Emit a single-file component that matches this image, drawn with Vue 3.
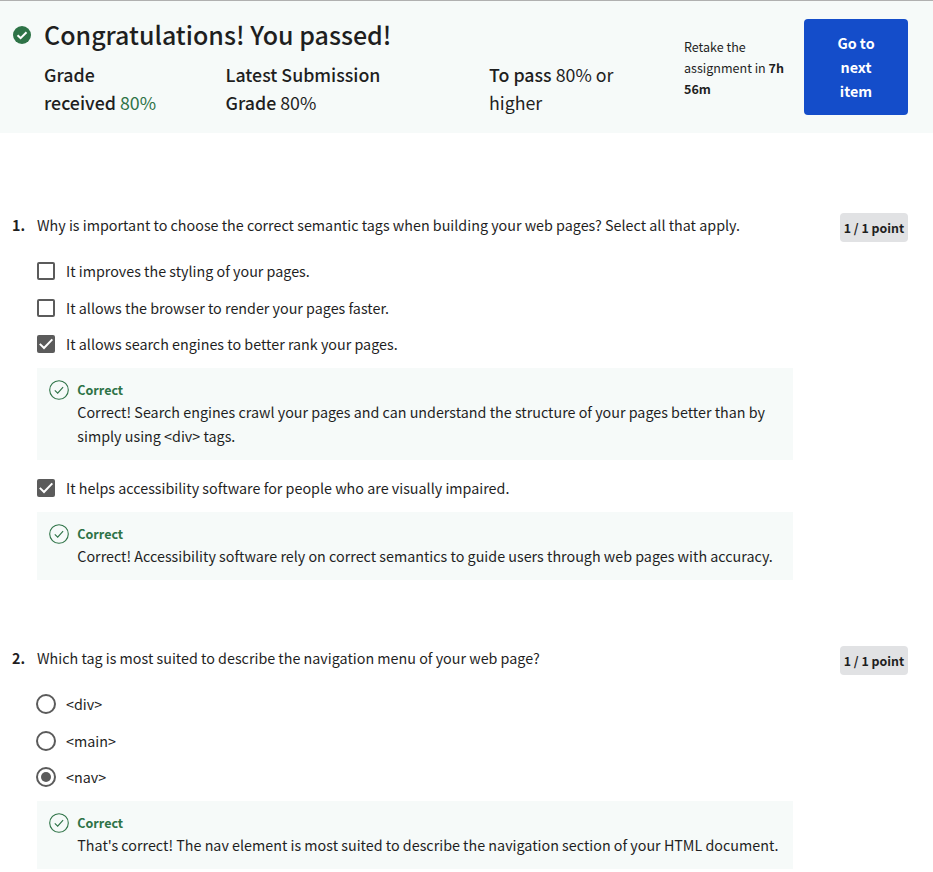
<script setup>
const questions = [
  {
    number: 1,
    prompt: 'Why is important to choose the correct semantic tags when building your web pages? Select all that apply.',
    type: 'checkbox',
    options: [
      { label: 'It improves the styling of your pages.' },
      { label: 'It allows the browser to render your pages faster.' },
      {
        label: 'It allows search engines to better rank your pages.',
        checked: true,
        feedback: [
          'Correct! Search engines crawl your pages and can understand the structure of your pages better than by',
          'simply using <div> tags.',
        ],
      },
      {
        label: 'It helps accessibility software for people who are visually impaired.',
        checked: true,
        feedback: ['Correct! Accessibility software rely on correct semantics to guide users through web pages with accuracy.'],
      },
    ],
  },
  {
    number: 2,
    prompt: 'Which tag is most suited to describe the navigation menu of your web page?',
    type: 'radio',
    options: [
      { label: '<div>' },
      { label: '<main>' },
      {
        label: '<nav>',
        checked: true,
        feedback: ["That's correct! The nav element is most suited to describe the navigation section of your HTML document."],
      },
    ],
  },
]
</script>

<template>
  <div class="page">
    <header class="banner">
      <svg class="pass-icon" viewBox="0 0 18 18">
        <circle cx="9" cy="9" r="9" />
        <path d="M4.5 9.2 7.6 12.1 13.5 6.2" />
      </svg>
      <div class="summary">
        <h1>Congratulations! You passed!</h1>
        <div class="grades">
          <p><b>Grade<br />received</b> <span class="green">80%</span></p>
          <p><b>Latest Submission<br />Grade</b> 80%</p>
          <p><b>To pass</b> 80% or<br />higher</p>
        </div>
      </div>
      <p class="retake">Retake the<br />assignment in <b>7h<br />56m</b></p>
      <button class="next">Go to<br />next<br />item</button>
    </header>

    <main>
      <section v-for="q in questions" :key="q.number" class="question">
        <span class="number">{{ q.number }}.</span>
        <div class="body">
          <p class="prompt">{{ q.prompt }}</p>
          <div v-for="o in q.options" :key="o.label">
            <div class="option">
              <svg v-if="q.type === 'checkbox'" class="control" viewBox="0 0 20 20">
                <rect v-if="!o.checked" class="outline" x="2" y="2" width="16" height="16" rx="1" />
                <template v-else>
                  <rect class="fill" x="1" y="1" width="18" height="18" rx="2" />
                  <path class="tick" d="M3.8 9.9 8 14 16.3 5.4" />
                </template>
              </svg>
              <svg v-else class="control" viewBox="0 0 20 20">
                <circle class="outline" cx="10" cy="10" r="9" />
                <circle v-if="o.checked" class="fill" cx="10" cy="10" r="5" />
              </svg>
              <span>{{ o.label }}</span>
            </div>
            <div v-if="o.feedback" class="feedback">
              <svg class="ok" viewBox="0 0 20 20">
                <circle cx="10" cy="10" r="9.3" />
                <path d="M5.8 10.3 8.7 13.1 14.1 7.2" />
              </svg>
              <div>
                <strong>Correct</strong>
                <p v-for="line in o.feedback" :key="line">{{ line }}</p>
              </div>
            </div>
          </div>
        </div>
        <span class="points">1 / 1 point</span>
      </section>
    </main>
  </div>
</template>

<style>
body {
  background: #fff;
}
</style>

<style scoped>
.page {
  height: 872px;
  overflow: hidden;
  color: #1f1f1f;
  font-family: "Noto Sans CJK SC", "Noto Sans", sans-serif;
  font-size: 14.32px;
  line-height: 24px;
  white-space: nowrap;
}
p,
h1 {
  margin: 0;
}
.banner {
  display: flex;
  align-items: flex-start;
  box-sizing: border-box;
  height: 133px;
  padding: 18px 25px 0 13px;
  border-top: 1px solid #b0b0b0;
  background: #f6faf9;
}
.pass-icon {
  width: 18px;
  height: 18px;
  margin-top: 7px;
  fill: #2e7347;
}
.pass-icon path {
  fill: none;
  stroke: #fff;
  stroke-width: 2;
}
.summary {
  width: 640px;
  margin-left: 13px;
}
h1 {
  font-size: 25px;
  font-weight: 500;
  line-height: 30px;
}
.grades {
  display: grid;
  grid-template-columns: 181.5px 263.5px 1fr;
  margin-top: 11px;
  font-size: 17.8px;
  line-height: 28px;
}
.grades b {
  font-weight: 500;
}
.green {
  color: #2e7347;
}
.retake {
  width: 120px;
  margin-top: 17px;
  font-size: 12.54px;
  line-height: 21px;
}
.next {
  flex: none;
  width: 104px;
  height: 96px;
  padding: 0;
  border: 0;
  border-radius: 4px;
  background: #144dca;
  color: #fff;
  font: 700 14.33px/24px "Noto Sans CJK SC", "Noto Sans", sans-serif;
}
main {
  padding: 80px 25px 0 12px;
}
.question {
  display: grid;
  grid-template-columns: 25px 756px 1fr;
  align-items: start;
  margin-bottom: 56.5px;
}
.number {
  font-weight: 700;
}
.prompt {
  margin-bottom: 16px;
}
.option {
  display: flex;
  align-items: center;
  height: 36.5px;
}
.control {
  width: 20px;
  height: 20px;
  margin: 0 10px 0 -1px;
}
.outline {
  fill: none;
  stroke: #5b5b5b;
  stroke-width: 2;
}
.fill {
  fill: #5b5b5b;
}
.tick {
  fill: none;
  stroke: #fff;
  stroke-width: 2;
}
.feedback {
  display: flex;
  margin: 5.75px 0 9.5px;
  padding: 11px 12px 12px;
  background: #f6faf9;
}
.ok {
  flex: none;
  width: 20px;
  height: 20px;
  margin: 1px 8.3px 0 0;
  fill: none;
  stroke: #2e7347;
  stroke-width: 1.1;
}
.feedback strong {
  display: block;
  color: #2e7347;
  font-size: 12.54px;
  line-height: 21px;
}
.points {
  justify-self: end;
  width: 68px;
  height: 29px;
  border-radius: 4px;
  background: #e1e2e4;
  font-size: 12.4px;
  font-weight: 700;
  line-height: 30px;
  text-align: center;
}
</style>
